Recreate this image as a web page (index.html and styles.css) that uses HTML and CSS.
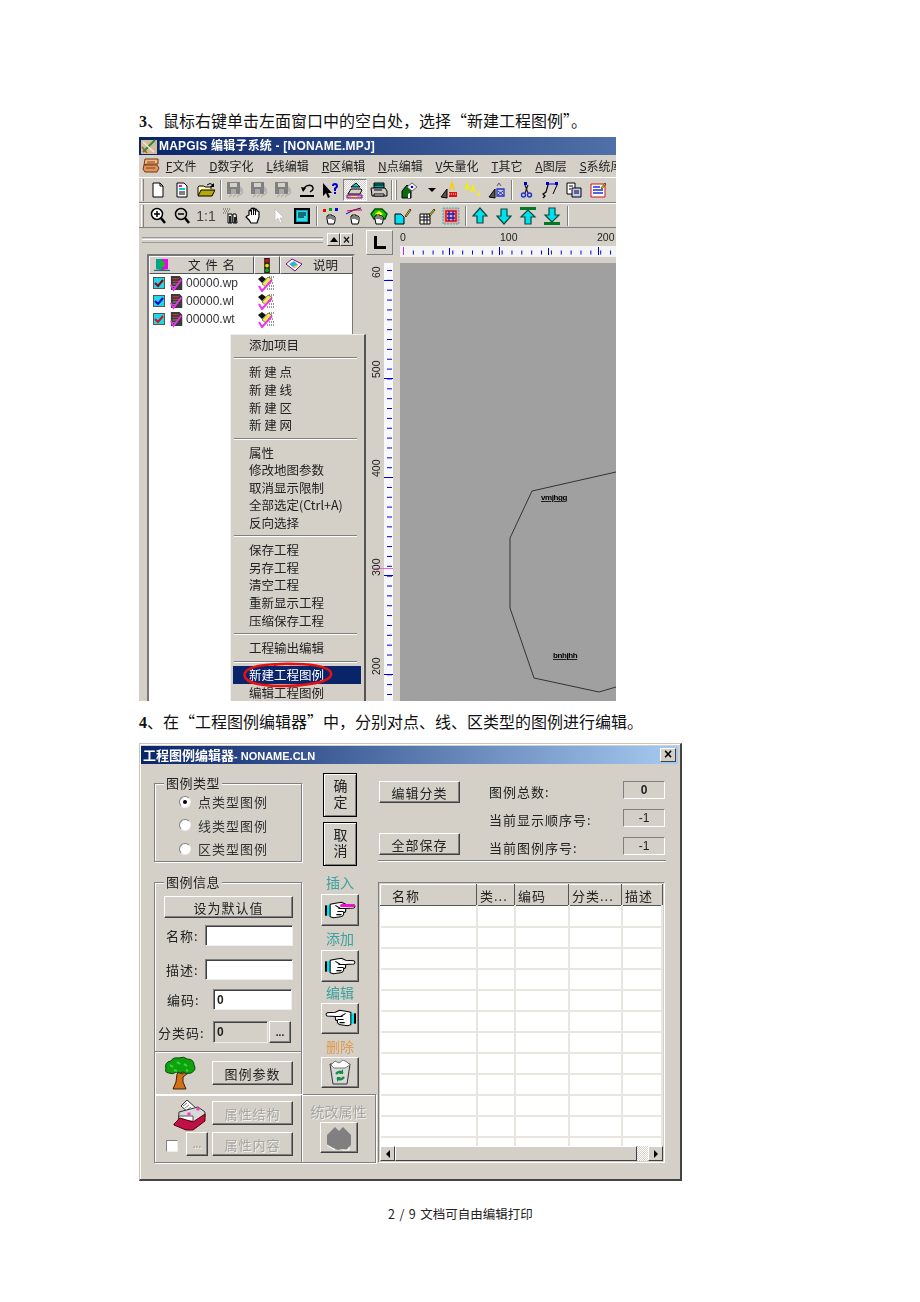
FILE: index.html
```html
<!DOCTYPE html>
<html lang="zh-CN">
<head>
<meta charset="utf-8">
<title>MAPGIS</title>
<link rel="stylesheet" href="styles.css">
</head>
<body>
<svg class="defs" aria-hidden="true">
<symbol id="i-new" viewBox="0 0 18 18"><path d="M4 2h7l3 3v11H4z" fill="#fff" stroke="#000"/><path d="M11 2v3h3" fill="none" stroke="#000"/></symbol>
<symbol id="i-doc" viewBox="0 0 18 18"><path d="M4 2h7l3 3v11H4z" fill="#fff" stroke="#000"/><path d="M6 5h3" stroke="#f0f" stroke-width="2"/><path d="M6 8h6" stroke="#0cc" stroke-width="2"/><path d="M6 11h6M6 13h6" stroke="#000"/></symbol>
<symbol id="i-open" viewBox="0 0 18 18"><path d="M1 14V6l1-1h5l1 1h6v2" fill="#ffffb0" stroke="#000"/><path d="M1 15l3-6h14l-3 6z" fill="#b8a800" stroke="#000"/><path d="M10 4q3-3 6 0" fill="none" stroke="#000"/><path d="M17 2v4h-4z"/></symbol>
<symbol id="i-save" viewBox="0 0 18 18"><path d="M1 1h13v12H1z" fill="#808080"/><path d="M4 2h7v4H4z" fill="#d4d0c8"/><path d="M5 8h5v5H5z" fill="#a8a8a8"/><path d="M3 16l3-3M7 16l3-3M11 16l3-3M14 14l3-3" stroke="#b4b4b4" stroke-width="1.600"/><path d="M14 5l3 3v3h-3z" fill="#b4b4b4"/></symbol>
<symbol id="i-undo" viewBox="0 0 18 18"><path d="M6 7q4-4 8-2 3 3-2 6" fill="none" stroke="#000" stroke-width="1.400"/><path d="M3 6l2 5 3-4z"/><path d="M2 14h14v2H2z"/></symbol>
<symbol id="i-help" viewBox="0 0 18 18"><path d="M1 2v13l3-3 2 5 2-1-2-4h4z"/><path d="M10 5q0-3 3-3 3 0 3 3 0 2-2 3v2h-2V7q2-1 2-2t-1-1q-1 0-1 1zM12 11h2v2h-2z" fill="#00c"/></symbol>
<symbol id="i-layout" viewBox="0 0 18 18"><path d="M5 6l5-4 4 4z" fill="#0cc" stroke="#000"/><path d="M2 13l3-5h10l1 1-2 4z" fill="#d4d0c8" stroke="#000"/><path d="M1 14h15v3H1z" fill="#d9a0d0" stroke="#800080"/><path d="M5 15h6v1H5z" fill="#ff0"/></symbol>
<symbol id="i-print" viewBox="0 0 18 18"><path d="M4 2h10v5H4z" fill="#00a0a0" stroke="#000"/><path d="M1 7h14l2 3v5H2z" fill="#c8c8c8" stroke="#000"/><path d="M4 13h10v2H4z" fill="#fff" stroke="#000"/><path d="M4 4h10M4 9h8" stroke="#000"/></symbol>
<symbol id="i-house" viewBox="0 0 18 18"><path d="M1 17V10l5-6 4 4v9z" fill="#0a6a12" stroke="#000"/><path d="M6 6l5-4 5 4-5 4z" fill="#fff" stroke="#666"/><circle cx="11" cy="6" r="1.300" fill="#00f"/><path d="M7 13l2-1v5H7z" fill="#fff"/></symbol>
<symbol id="i-a1" viewBox="0 0 18 18"><path d="M1 16l6-8v9z" fill="#555" stroke="#000"/><path d="M10 9l2-7 2 7" fill="none" stroke="#fc0" stroke-width="1.500"/><path d="M9 11h8v5H9z" fill="#e01010"/><path d="M9 13h8" stroke="#fff" stroke-dasharray="1 1"/></symbol>
<symbol id="i-a2" viewBox="0 0 18 18"><g fill="none" stroke="#f4f000" stroke-width="1.400"><path d="M1 9l2-6 2 6M2 7h2"/><path d="M7 11l2-6 2 6M8 9h2"/></g><path d="M13 15l1.500-5 1.500 5z" fill="#f4f000"/></symbol>
<symbol id="i-a3" viewBox="0 0 18 18"><path d="M1 16l6-8v9z" fill="#555" stroke="#000"/><path d="M9 5l2-3 2 3" fill="none" stroke="#555"/><path d="M9 8h7v7H9z" fill="none" stroke="#2030d0" stroke-width="1.300"/><path d="M10 10l5 4M15 10l-5 4" stroke="#2030d0"/></symbol>
<symbol id="i-cut" viewBox="0 0 18 18"><path d="M7 1h3v3H7z" fill="#00c"/><path d="M8 4l3 8M11 4l-3 8" stroke="#222" stroke-width="1.200"/><circle cx="6.500" cy="14" r="2" fill="none" stroke="#2030d0" stroke-width="1.400"/><circle cx="12.500" cy="14" r="2" fill="none" stroke="#2030d0" stroke-width="1.400"/></symbol>
<symbol id="i-node" viewBox="0 0 18 18"><path d="M6 3h10" stroke="#00c"/><path d="M5 1h3v3H5zM14 1h3v3h-3z" fill="#00c"/><path d="M7 4L5 11l-3 2 2 2-2 2" fill="none" stroke="#000" stroke-width="1.200"/><path d="M16 4l-4 9" stroke="#000"/></symbol>
<symbol id="i-copy" viewBox="0 0 18 18"><path d="M2 2h8v11H2z" fill="#fff" stroke="#000"/><path d="M7 7h9v9H7z" fill="#c0ccff" stroke="#000"/><path d="M4 5h4M4 8h2M9 10h5M9 12h5" stroke="#000"/></symbol>
<symbol id="i-form" viewBox="0 0 18 18"><path d="M2 3h14v13H2z" fill="#fff" stroke="#d01010"/><path d="M4 6h7M4 9h10M4 12h10" stroke="#2030d0" stroke-width="1.400"/><path d="M12 7l4-5 1 1-4 5z" fill="#f4e000" stroke="#000" stroke-width=".6"/></symbol>
<symbol id="i-zin" viewBox="0 0 18 18"><circle cx="8" cy="7" r="5.500" fill="#fff" stroke="#000" stroke-width="1.500"/><path d="M5 7h6M8 4v6" stroke="#000" stroke-width="1.500"/><path d="M12 11l4 5" stroke="#000" stroke-width="2.500"/></symbol>
<symbol id="i-zout" viewBox="0 0 18 18"><circle cx="8" cy="7" r="5.500" fill="#d4d0c8" stroke="#000" stroke-width="1.500"/><path d="M5 7h6" stroke="#000" stroke-width="1.500"/><path d="M12 11l4 5" stroke="#000" stroke-width="2.500"/></symbol>
<symbol id="i-bino" viewBox="0 0 18 18"><path d="M2 2h7M3 4h6M2 6h6" stroke="#555" stroke-dasharray="1 1"/><path d="M7 7h4v9H7zM12 7h3l1 9h-4z" fill="#fff" stroke="#000"/><path d="M8 9h2v7H8zM13 10h2v6h-2z" fill="#222"/></symbol>
<symbol id="i-hand" viewBox="0 0 18 18"><path d="M4 8V4l1-1 1 1V2l1-1 1 1v0l1-1 1 1v1l1-1 1 1v1l1 0 1 1v5l-1 3-1 3H6l-2-3-3-3 1-1z" fill="#fff" stroke="#000" stroke-width="1.200"/><path d="M6.500 3v5M8.500 2v6M10.500 3v5" stroke="#000"/></symbol>
<symbol id="i-ptr" viewBox="0 0 18 18"><path d="M6 2v12l3-3 2 5 2-1-2-4h4z" fill="#fff" stroke="#bbb" stroke-width=".7"/></symbol>
<symbol id="i-box" viewBox="0 0 18 18"><path d="M2 2h14v14H2z" fill="#00a8b8" stroke="#000" stroke-width="2"/><path d="M4 4h10v10H4z" fill="#30d8e8"/><path d="M5 6h8M5 8h8M5 10h6" stroke="#000"/></symbol>
<symbol id="i-hrgb" viewBox="0 0 18 18"><path d="M1 2h3v3H1z" fill="#e00"/><path d="M7 1h3v3H7z" fill="#0a0"/><path d="M13 1h3v3h-3z" fill="#00e"/><use href="#hand-s"/></symbol>
<symbol id="i-hline" viewBox="0 0 18 18"><path d="M0 7l8-4 7-2" stroke="#00c" fill="none"/><path d="M1 4l8-1 7 0" stroke="#e00" fill="none"/><use href="#hand-s"/></symbol>
<symbol id="i-harea" viewBox="0 0 18 18"><path d="M1 7l4-5h7l5 5-2 5H4z" fill="#10c010" stroke="#054a05" stroke-width="1.400"/><path d="M5 7l4-3 4 3-3 2z" fill="#ff0"/><use href="#hand-s"/></symbol>
<symbol id="hand-s" viewBox="0 0 18 18"><path d="M5 12V9h1V8h4v1h2l1 1v4l-1 3H6z" fill="#fff" stroke="#000"/><path d="M7 9v3M9 9v3M11 10v3" stroke="#000"/></symbol>
<symbol id="i-pgp" viewBox="0 0 18 18"><path d="M1 7h6l3 3v7H1z" fill="#00e0f0" stroke="#000"/><path d="M11 9l5-7 1 1-5 7z" fill="#f4e000" stroke="#000" stroke-width=".7"/></symbol>
<symbol id="i-tbp" viewBox="0 0 18 18"><path d="M2 7h10v10H2z" fill="#fff" stroke="#000"/><path d="M2 10h10M2 13h10M6 7v10M9 7v10" stroke="#000"/><path d="M11 8l5-6 1 1-5 6z" fill="#f4e000" stroke="#000" stroke-width=".7"/></symbol>
<symbol id="i-fuzz" viewBox="0 0 18 18"><path d="M1 1h16v16H1z" fill="#f0a0a0" stroke="#20c0c0" stroke-dasharray="2 1"/><path d="M4 4h10v10H4z" fill="none" stroke="#d01010" stroke-width="1.500"/><path d="M5 7h8M5 11h8M7 4v10M11 4v10" stroke="#1020c0" stroke-width="1.300"/></symbol>
<symbol id="i-up" viewBox="0 0 18 18"><path d="M9 1L2 9h4v7h6V9h4z" fill="#00e0f0" stroke="#0a4a3a" stroke-width="1.200"/></symbol>
<symbol id="i-dn" viewBox="0 0 18 18"><path d="M9 17L2 9h4V2h6v7h4z" fill="#00e0f0" stroke="#0a4a3a" stroke-width="1.200"/></symbol>
<symbol id="i-upg" viewBox="0 0 18 18"><path d="M1 0h16v3H1z" fill="#007a20"/><path d="M9 3L2 10h4v7h6v-7h4z" fill="#00e0f0" stroke="#0a4a3a" stroke-width="1.200"/></symbol>
<symbol id="i-dng" viewBox="0 0 18 18"><path d="M1 15h16v3H1z" fill="#007a20"/><path d="M9 15L2 8h4V1h6v7h4z" fill="#00e0f0" stroke="#0a4a3a" stroke-width="1.200"/></symbol>
<symbol id="i-fpage" viewBox="0 0 16 17"><path d="M1 0h10l3 3v13H1z" fill="#3a3a3a"/><path d="M3 3h7M3 6h8" stroke="#e04040"/><path d="M3 9h6M3 12h4" stroke="#999"/><path d="M1 10l3 6 9-12" fill="none" stroke="#f030f0" stroke-width="2"/></symbol>
<symbol id="i-fpen" viewBox="0 0 17 17"><path d="M0 4l4-3 4 3-4 4z" fill="#111"/><path d="M4 9l6-7 4 2-6 8z" fill="#ecec50" stroke="#333" stroke-width=".6"/><path d="M10 8h6M11 11h5M9 14h7M11 2h5" stroke="#333" stroke-dasharray="1 1"/><path d="M1 11l3 5 10-11" fill="none" stroke="#f030f0" stroke-width="2"/></symbol>
<symbol id="hand" viewBox="0 0 30 18"><path d="M0 4h2v10H0z" fill="#000"/><path d="M2 4h3v10H2z" fill="#00e0f0"/><path d="M5 3l5-1 6-1 4 2 8 .5q2 1.500 0 3l-8 .5v2q0 2-2 2v2q-1 2-3 2l-7 1-3-1z" fill="#fff" stroke="#000"/><path d="M13 7h7M12 10h6M11 13h5M10 4l5 3" stroke="#000" fill="none"/></symbol>
</svg>

<main class="page">
<p class="line"><span class="num">3</span>、鼠标右键单击左面窗口中的空白处，选择“新建工程图例”。</p>

<section class="win shot">
  <header class="tb">
    <svg class="tb-ico" viewBox="0 0 18 18"><path d="M1 3h16v14H1z" fill="#d4bc98"/><path d="M3 15L15 3" stroke="#2a8a40" stroke-width="2"/><path d="M3 5l11 10" stroke="#f0e8d8" stroke-width="1.500"/><path d="M2 10l5 6" stroke="#a06030" stroke-width="1.500"/></svg>
    <span>MAPGIS 编辑子系统 - [NONAME.MPJ]</span>
  </header>
  <nav class="menubar">
    <svg class="mb-ico" viewBox="0 0 18 18"><path d="M3 2h13v5H5l-3 1z" fill="#e8c080" stroke="#803010"/><path d="M2 8h13l2 3-2 4H3l-2-3z" fill="#d89860" stroke="#803010"/><path d="M5 5h8M4 11h9" stroke="#a03010"/></svg>
    <span><u>F</u>文件</span><span><u>D</u>数字化</span><span><u>L</u>线编辑</span><span><u>R</u>区编辑</span><span><u>N</u>点编辑</span><span><u>V</u>矢量化</span><span><u>T</u>其它</span><span><u>A</u>图层</span><span><u>S</u>系统库</span>
  </nav>
  <div class="bar">
    <i class="grip"></i>
    <b class="cell"><svg class="ico"><use href="#i-new"/></svg></b>
    <b class="cell"><svg class="ico"><use href="#i-doc"/></svg></b>
    <b class="cell"><svg class="ico"><use href="#i-open"/></svg></b>
    <i class="sep"></i>
    <b class="cell"><svg class="ico"><use href="#i-save"/></svg></b>
    <b class="cell"><svg class="ico"><use href="#i-save"/></svg></b>
    <b class="cell"><svg class="ico"><use href="#i-save"/></svg></b>
    <b class="cell"><svg class="ico"><use href="#i-undo"/></svg></b>
    <b class="cell"><svg class="ico"><use href="#i-help"/></svg></b>
    <b class="cell on"><svg class="ico"><use href="#i-layout"/></svg></b>
    <b class="cell"><svg class="ico"><use href="#i-print"/></svg></b>
    <i class="sep wide"></i>
    <b class="cell"><svg class="ico"><use href="#i-house"/></svg></b>
    <b class="drop"></b>
    <b class="cell"><svg class="ico"><use href="#i-a1"/></svg></b>
    <b class="cell"><svg class="ico"><use href="#i-a2"/></svg></b>
    <b class="cell"><svg class="ico"><use href="#i-a3"/></svg></b>
    <i class="sep"></i>
    <b class="cell"><svg class="ico"><use href="#i-cut"/></svg></b>
    <b class="cell"><svg class="ico"><use href="#i-node"/></svg></b>
    <b class="cell"><svg class="ico"><use href="#i-copy"/></svg></b>
    <b class="cell"><svg class="ico"><use href="#i-form"/></svg></b>
  </div>
  <div class="bar">
    <i class="grip"></i>
    <b class="cell"><svg class="ico"><use href="#i-zin"/></svg></b>
    <b class="cell"><svg class="ico"><use href="#i-zout"/></svg></b>
    <b class="cell ratio">1:1</b>
    <b class="cell"><svg class="ico"><use href="#i-bino"/></svg></b>
    <b class="cell"><svg class="ico"><use href="#i-hand"/></svg></b>
    <b class="cell"><svg class="ico"><use href="#i-ptr"/></svg></b>
    <b class="cell"><svg class="ico"><use href="#i-box"/></svg></b>
    <i class="sep"></i>
    <b class="cell"><svg class="ico"><use href="#i-hrgb"/></svg></b>
    <b class="cell"><svg class="ico"><use href="#i-hline"/></svg></b>
    <b class="cell"><svg class="ico"><use href="#i-harea"/></svg></b>
    <b class="cell"><svg class="ico"><use href="#i-pgp"/></svg></b>
    <b class="cell"><svg class="ico"><use href="#i-tbp"/></svg></b>
    <b class="cell"><svg class="ico"><use href="#i-fuzz"/></svg></b>
    <i class="sep"></i>
    <b class="cell"><svg class="ico"><use href="#i-up"/></svg></b>
    <b class="cell"><svg class="ico"><use href="#i-dn"/></svg></b>
    <b class="cell"><svg class="ico"><use href="#i-upg"/></svg></b>
    <b class="cell"><svg class="ico"><use href="#i-dng"/></svg></b>
    <i class="sep end"></i>
  </div>

  <div class="work">
    <aside class="panel">
      <div class="dock">
        <i class="dock-lines"></i>
        <b class="mini"><i class="tri"></i></b>
        <b class="mini mini-x">×</b>
      </div>
      <div class="list">
        <div class="list-head">
          <span class="lh lh-name">
            <svg class="lh-ico" viewBox="0 0 18 14"><path d="M1 12l8-1 8 1v1H1z" fill="#2a6a6a"/><path d="M3 1h6v10H3z" fill="#00a0a0"/><path d="M9 1h6v10H9z" fill="#f000f0"/><circle cx="9" cy="6" r="3" fill="#10c010"/></svg>
            <span class="lh-wide">文 件 名</span>
          </span>
          <span class="lh lh-light"><svg class="lh-ico-s" viewBox="0 0 12 16"><path d="M3 0h6v16H3z" fill="#222"/><circle cx="6" cy="3" r="2" fill="#e01010"/><circle cx="6" cy="8" r="2" fill="#e8e000"/><circle cx="6" cy="13" r="2" fill="#10b010"/></svg></span>
          <span class="lh lh-desc">
            <svg class="lh-ico" viewBox="0 0 18 14"><path d="M1 6l6-5 10 5-7 7z" fill="#fff" stroke="#808" /><path d="M4 6l5-3 4 4-4 3z" fill="#30b0e0"/><path d="M8 8l5-1-2 3z" fill="#e8e000"/></svg>
            <span>说明</span>
          </span>
        </div>
        <div class="file"><i class="chk"><svg viewBox="0 0 10 10"><path d="M1 5l3 3 5-6" fill="none" stroke="#900" stroke-width="2"/></svg></i><svg class="f1"><use href="#i-fpage"/></svg><span class="fn">00000.wp</span><svg class="f2"><use href="#i-fpen"/></svg></div>
        <div class="file"><i class="chk"><svg viewBox="0 0 10 10"><path d="M1 5l3 3 5-6" fill="none" stroke="#00c" stroke-width="2"/></svg></i><svg class="f1"><use href="#i-fpage"/></svg><span class="fn">00000.wl</span><svg class="f2"><use href="#i-fpen"/></svg></div>
        <div class="file"><i class="chk"><svg viewBox="0 0 10 10"><path d="M1 5l3 3 5-6" fill="none" stroke="#e01010" stroke-width="2"/></svg></i><svg class="f1"><use href="#i-fpage"/></svg><span class="fn">00000.wt</span><svg class="f2"><use href="#i-fpen"/></svg></div>
      </div>
    </aside>

    <div class="view">
      <div class="corner"><i class="ell"></i></div>
      <svg class="rul-top" viewBox="0 0 216 27">
        <defs><pattern id="tx" width="9.860" height="27" patternUnits="userSpaceOnUse" x="3"><path d="M.5 20.500v4" stroke="#0000e0"/></pattern></defs>
        <rect width="216" height="16" fill="#d4d0c8"/>
        <rect y="16" width="216" height="11" fill="#f4f4f4"/>
        <rect width="216" height="27" fill="url(#tx)"/>
        <path d="M3.500 17v8" stroke="#e020e0"/>
        <path d="M49.500 18v7M99.500 17v8M148.500 18v7M198.500 17v8" stroke="#0000e0"/>
        <text x="0" y="11">0</text><text x="100" y="11">100</text><text x="197" y="11">200</text>
      </svg>
      <svg class="rul-left" viewBox="0 0 27 438">
        <defs><pattern id="ty" width="27" height="9.860" patternUnits="userSpaceOnUse" y="7"><path d="M21 .5h5" stroke="#0000e0"/></pattern></defs>
        <rect width="27" height="438" fill="#d4d0c8"/>
        <rect x="18" width="9" height="438" fill="#f8f8ff"/>
        <rect width="27" height="438" fill="url(#ty)"/>
        <path d="M18 17.500h9M18 115.500h9M18 214.500h9M18 312.500h9M18 411.500h9" stroke="#0000e0"/>
        <path d="M9 305.500h18" stroke="#f060e0"/>
        <text transform="translate(14 15) rotate(-90)">60</text>
        <text transform="translate(14 115) rotate(-90)">500</text>
        <text transform="translate(14 214) rotate(-90)">400</text>
        <text transform="translate(14 313) rotate(-90)">300</text>
        <text transform="translate(14 412) rotate(-90)">200</text>
      </svg>
      <svg class="canvas" viewBox="0 0 216 438">
        <rect width="216" height="438" fill="#a0a0a0"/>
        <path d="M216 209L132 228L110 275V345L134 415L199 429L216 424" fill="none" stroke="#333"/>
        <text class="geo" x="141" y="237">vmjhgg</text>
        <text class="geo" x="153" y="395">bnhjhh</text>
      </svg>
    </div>

    <div class="menu">
      <div class="mi">添加项目</div>
      <hr class="ms">
      <div class="mi">新 建 点</div>
      <div class="mi">新 建 线</div>
      <div class="mi">新 建 区</div>
      <div class="mi">新 建 网</div>
      <hr class="ms">
      <div class="mi">属性</div>
      <div class="mi">修改地图参数</div>
      <div class="mi">取消显示限制</div>
      <div class="mi">全部选定(Ctrl+A)</div>
      <div class="mi">反向选择</div>
      <hr class="ms">
      <div class="mi">保存工程</div>
      <div class="mi">另存工程</div>
      <div class="mi">清空工程</div>
      <div class="mi">重新显示工程</div>
      <div class="mi">压缩保存工程</div>
      <hr class="ms">
      <div class="mi">工程输出编辑</div>
      <hr class="ms">
      <div class="mi sel">新建工程图例</div>
      <div class="mi">编辑工程图例</div>
      <svg class="circle" viewBox="0 0 92 26"><path d="M44 2C22 2 6 4 3 11c-3 8 10 13 36 13 22 0 48-3 50-11C91 6 74 2 54 2c-8 0-14-1-22 1" fill="none" stroke="#e81010" stroke-width="2.600"/></svg>
    </div>
  </div>
</section>

<p class="line second"><span class="num">4</span>、在“工程图例编辑器”中，分别对点、线、区类型的图例进行编辑。</p>

<section class="dlg shot">
  <header class="dlg-tb">
    <span>工程图例编辑器<em>- NONAME.CLN</em></span>
    <b class="close">×</b>
  </header>
  <div class="dlg-main">
    <div class="dlg-left">
      <div class="dlg-upper">
        <div class="groups">
          <div class="grp grp-type">
            <span class="legend">图例类型</span>
            <label class="radio"><i class="dot on"></i>点类型图例</label>
            <label class="radio"><i class="dot"></i>线类型图例</label>
            <label class="radio"><i class="dot"></i>区类型图例</label>
          </div>
          <div class="grp grp-info">
            <span class="legend">图例信息</span>
            <div class="info-top">
              <button class="btn btn-default">设为默认值</button>
              <div class="field f-name"><span>名称:</span><i class="input"></i></div>
              <div class="field f-desc"><span>描述:</span><i class="input"></i></div>
              <div class="field f-code"><span>编码:</span><i class="input val">0</i></div>
              <div class="field f-cat"><span>分类码:</span><i class="input val ro">0</i><button class="btn btn-more">...</button></div>
            </div>
            <div class="info-tree">
              <svg class="tree" viewBox="0 0 32 34"><path d="M13 18l-1 8-3 7h13l-3-7 0-5 5-4-3-1-3 2-3-2z" fill="#d07018" stroke="#402000"/><path d="M2 13Q0 6 7 5q2-4 8-3 5-2 8 1 7 0 7 6 3 5-3 8-5 2-8-1-3 2-7 0-3 3-7 1-5-1-3-4z" fill="#10a010" stroke="#054a05"/><path d="M6 9l3 2M13 6l3 2M20 8l3 2M10 14l3 1M22 14l2 1" stroke="#30e030" stroke-width="2"/></svg>
              <button class="btn btn-wide">图例参数</button>
            </div>
          </div>
        </div>
        <div class="midcol">
          <button class="btn btn-tall"><span class="vert">确定</span></button>
          <button class="btn btn-tall btn-gap"><span class="vert">取消</span></button>
          <span class="cap teal c1">插入</span>
          <button class="btn btn-ico"><svg class="hand"><use href="#hand"/></svg><i class="pink"></i></button>
          <span class="cap teal c2">添加</span>
          <button class="btn btn-ico"><svg class="hand"><use href="#hand"/></svg></button>
          <span class="cap teal c3">编辑</span>
          <button class="btn btn-ico short"><svg class="hand flip"><use href="#hand"/></svg></button>
          <span class="cap orange c2">删除</span>
          <button class="btn btn-ico short">
            <svg class="bin" viewBox="0 0 24 26"><path d="M2 4l3 20h14l3-20z" fill="#d8d8d8" stroke="#333"/><path d="M3 5l4-4 4 2 4-3 4 2 3 3-5 3H6z" fill="#fff" stroke="#777"/><path d="M8 14q3-4 7-1M16 17q-3 4-7 1" fill="none" stroke="#109040" stroke-width="2.200"/><path d="M15 9v5h-4zM9 22v-5h4z" fill="#109040"/></svg>
          </button>
        </div>
      </div>
      <div class="attr">
        <div class="attr-l">
          <svg class="card" viewBox="0 0 33 33"><path d="M8 7l6-6 9 8-6 6z" fill="#fff" stroke="#333"/><path d="M10 7l4-3M12 9l4-3M14 11l4-3" stroke="#888"/><path d="M6 13l19-5 7 5v5l-6 6H5z" fill="#d8d8d8" stroke="#333"/><path d="M6 17h14v5H6z" fill="#fff" stroke="#555"/><path d="M1 25l6-6 13 4 12-8v7l-12 9-7 0-12-5z" fill="#c01048" stroke="#500"/><circle cx="25" cy="10" r="1.800" fill="#f040c0"/><circle cx="16" cy="15" r="1.800" fill="#f040c0"/></svg>
          <button class="btn btn-wide off">属性结构</button>
          <div class="attr-chk"><i class="box"></i><button class="btn btn-more off">...</button></div>
          <button class="btn btn-wide off">属性内容</button>
        </div>
        <div class="attr-r">
          <span class="cap gray">统改属性</span>
          <button class="btn btn-ico short"><svg class="blob" viewBox="0 0 30 26"><path d="M3 10l8-8 4 4 4-4 8 8v10l-5 5-5-1-3 1-11-5z" fill="#808080"/><path d="M3 20l8 5M18 25h7v-3" stroke="#fff" fill="none"/></svg></button>
        </div>
      </div>
    </div>

    <div class="dlg-right">
      <div class="stats">
        <div class="stat-btns">
          <button class="btn btn-wide">编辑分类</button>
          <button class="btn btn-wide">全部保存</button>
        </div>
        <div class="stat-grid">
          <span>图例总数:</span><b class="num-box bold">0</b>
          <span>当前显示顺序号:</span><b class="num-box">-1</b>
          <span>当前图例序号:</span><b class="num-box">-1</b>
        </div>
      </div>
      <hr class="rule">
      <div class="tbl">
        <div class="tbl-scroll">
          <table>
            <thead><tr><th>名称</th><th>类...</th><th>编码</th><th>分类...</th><th>描述</th></tr></thead>
            <tbody>
              <tr><td></td><td></td><td></td><td></td><td></td></tr>
              <tr><td></td><td></td><td></td><td></td><td></td></tr>
              <tr><td></td><td></td><td></td><td></td><td></td></tr>
              <tr><td></td><td></td><td></td><td></td><td></td></tr>
              <tr><td></td><td></td><td></td><td></td><td></td></tr>
              <tr><td></td><td></td><td></td><td></td><td></td></tr>
              <tr><td></td><td></td><td></td><td></td><td></td></tr>
              <tr><td></td><td></td><td></td><td></td><td></td></tr>
              <tr><td></td><td></td><td></td><td></td><td></td></tr>
              <tr><td></td><td></td><td></td><td></td><td></td></tr>
              <tr><td></td><td></td><td></td><td></td><td></td></tr>
              <tr><td></td><td></td><td></td><td></td><td></td></tr>
            </tbody>
          </table>
        </div>
        <div class="hscroll">
          <b class="sb-btn"><i class="arr-l"></i></b>
          <b class="sb-thumb"></b>
          <i class="sb-track"></i>
          <b class="sb-btn"><i class="arr-r"></i></b>
        </div>
      </div>
    </div>
  </div>
</section>

<footer class="foot">2 / 9 文档可自由编辑打印</footer>
</main>
</body>
</html>
```

FILE: styles.css
```css
* { box-sizing: border-box; }
html, body { margin: 0; background: #fff; }
body { font-family: "Noto Sans CJK SC", "Liberation Sans", sans-serif; color: #111; }
.defs { position: absolute; width: 0; height: 0; }
.page { width: 920px; height: 1302px; padding: 111px 0 0 139px; overflow: hidden; }
.line { margin: 0; height: 18px; font-size: 16px; line-height: 18px; white-space: nowrap; color: #111; }
.line.second { margin-top: 11px; }
.num { font-family: "Liberation Serif", serif; font-weight: 700; }
.shot { filter: blur(.35px); }

/* main window */
.win { position: relative; width: 477px; height: 564px; margin-top: 8px; background: #d4d0c8; overflow: hidden; display: flex; flex-direction: column; }
.tb { height: 18px; flex: none; display: flex; align-items: center; gap: 1px; padding-left: 1px; background: linear-gradient(90deg, #0a246a, #4f70a8); color: #fff; font: 700 12px/18px "Liberation Sans", "Noto Sans CJK SC", sans-serif; letter-spacing: .2px; white-space: nowrap; }
.tb-ico { width: 18px; height: 18px; flex: none; }
.menubar { height: 22px; flex: none; display: flex; align-items: center; gap: 12.800px; font-size: 12px; line-height: 22px; color: #222; white-space: nowrap; padding-left: 3px; overflow: hidden; }
.menubar span { flex: none; }
.mb-ico { width: 18px; height: 18px; flex: none; margin-right: -7px; }
.bar { height: 26px; flex: none; display: flex; align-items: center; border-top: 1px solid #fff; border-bottom: 1px solid #808080; padding-left: 2px; }
.bar + .bar { height: 25px; }
.grip { width: 3px; height: 22px; margin-right: 2px; border-left: 1px solid #fff; border-right: 1px solid #808080; }
.cell { width: 24px; height: 22px; flex: none; display: flex; align-items: center; justify-content: center; }
.cell.on { background: repeating-conic-gradient(#fff 0 25%, #d4d0c8 0 50%) 0 0 / 2px 2px; border: 1px solid; border-color: #808080 #fff #fff #808080; }
.ico { width: 18px; height: 18px; }
.ratio { font: 400 14px "Liberation Sans", sans-serif; color: #444; }
.sep { width: 5px; height: 20px; flex: none; position: relative; background: linear-gradient(90deg, transparent 2px, #808080 2px, #808080 3px, #fff 3px, #fff 4px, transparent 4px); }
.sep.wide { width: 7px; background: linear-gradient(90deg, #808080 1px, #fff 1px, #fff 2px, transparent 2px, transparent 4px, #fff 4px, #fff 5px, #808080 5px, #808080 6px, transparent 6px); }
.sep.end { margin-left: 1px; }
.drop { width: 15px; flex: none; display: flex; justify-content: center; }
.drop::after { content: ""; border: 4px solid transparent; border-top: 4px solid #000; border-bottom: 0; margin-left: 4px; }

.work { position: relative; flex: 1; min-height: 0; display: flex; }
.panel { width: 227px; flex: none; padding-top: 5px; overflow: hidden; }
.dock { height: 13px; display: flex; align-items: center; padding-left: 3px; margin-bottom: 8px; }
.dock-lines { width: 181px; height: 6px; border-top: 1px solid #999; border-bottom: 1px solid #999; background: linear-gradient(#fff, #fff) 0 1px / 100% 1px no-repeat; margin-right: 4px; }
.mini { width: 13px; height: 13px; background: #d4d0c8; border: 1px solid; border-color: #fff #404040 #404040 #fff; display: flex; align-items: center; justify-content: center; font: 700 12px/10px "Liberation Sans", sans-serif; }
.tri { border: 4px solid transparent; border-bottom: 5px solid #000; border-top: 0; }
.list { margin-left: 8px; width: 208px; height: 460px; background: #fff; border: 2px solid; border-color: #777 #d4d0c8 transparent #777; box-shadow: inset -1px 0 #777; }
.list-head { height: 18px; display: flex; color: #222; font-size: 12.500px; line-height: 18px; }
.lh { display: flex; align-items: center; background: #d4d0c8; border: 1px solid; border-color: #fff #555 #555 #fff; }
.lh-name { width: 105px; padding-left: 3px; gap: 17px; }
.lh-wide { letter-spacing: 1px; }
.lh-light { width: 26px; justify-content: center; }
.lh-desc { flex: 1; padding-left: 4px; gap: 10px; }
.lh-ico { width: 18px; height: 14px; }
.lh-ico-s { width: 12px; height: 15px; }
.file { height: 18px; display: flex; align-items: center; padding-left: 4px; font: 400 12px "Liberation Sans", sans-serif; color: #333; }
.chk { width: 12px; height: 12px; flex: none; background: #20d8e8; border: 1px solid #555; display: block; }
.chk svg { display: block; width: 10px; height: 10px; }
.f1 { width: 14px; height: 17px; margin-left: 5px; flex: none; }
.fn { width: 72px; margin-left: 2px; flex: none; }
.f2 { width: 17px; height: 17px; flex: none; }

.view { width: 250px; flex: none; display: grid; grid-template-columns: 27px 7px 216px; grid-template-rows: 27px 6px 438px; padding-top: 2px; }
.corner { grid-column: 1; grid-row: 1; height: 25px; background: #d4d0c8; border: 1px solid; border-color: #fff #808080 #808080 #fff; display: flex; align-items: center; justify-content: center; }
.ell { width: 12px; height: 13px; border-left: 3px solid #000; border-bottom: 3px solid #000; }
.rul-top { grid-column: 3; grid-row: 1; width: 216px; height: 27px; }
.rul-left { grid-column: 1; grid-row: 3; width: 27px; height: 438px; }
.canvas { grid-column: 3; grid-row: 3; width: 216px; height: 438px; }
.rul-top text, .rul-left text { font: 400 10.500px "Liberation Sans", sans-serif; fill: #222; }
.canvas .geo { font: 700 8px "Liberation Sans", sans-serif; letter-spacing: -.4px; text-decoration: underline; fill: #000; }

.menu { position: absolute; left: 91px; top: 106px; width: 136px; height: 370px; padding: 1px 3px 0 2px; background: #d4d0c8; border-left: 1px solid #eee; border-top: 1px solid #eee; border-right: 2px solid #555; }
.mi { height: 17.600px; line-height: 17.600px; padding-left: 16px; font-size: 12.500px; color: #222; white-space: nowrap; }
.mi.sel { background: #0a246a; color: #fff; }
.ms { height: 2px; margin: 3.900px 4px 3.900px 1px; border: 0; border-top: 1px solid #808080; border-bottom: 1px solid #fff; }
.circle { position: absolute; left: 11px; top: 327px; width: 92px; height: 26px; }

/* dialog */
.dlg { width: 543px; height: 438px; margin-top: 13px; background: #d4d0c8; border-top: 1px solid #c8c4bc; border-left: 1px solid #c8c4bc; border-right: 2px solid #444; border-bottom: 2px solid #444; box-shadow: inset 1px 1px #fff; padding: 2px 1px 0 1px; }
.dlg-tb { height: 18px; margin-right: 1px; display: flex; justify-content: space-between; align-items: center; padding: 0 2px 0 2px; background: linear-gradient(90deg, #0a246a, #a6caf0); color: #fff; font: 700 13px/18px "Noto Sans CJK SC", sans-serif; }
.dlg-tb em { font: 700 11px "Liberation Sans", sans-serif; }
.close { width: 16px; height: 14px; background: #d4d0c8; color: #000; border: 1px solid; border-color: #fff #404040 #404040 #fff; font: 700 14px/11px "Liberation Sans", sans-serif; text-align: center; }
.dlg-main { display: flex; padding-left: 13px; }
.dlg-left { width: 222px; flex: none; }
.dlg-upper { display: flex; height: 330px; }
.groups { width: 148px; flex: none; }
.grp { position: relative; border: 1px solid #808080; box-shadow: 1px 1px #fff, inset 1px 1px #fff; }
.legend { position: absolute; left: 9px; top: -9px; padding: 0 2px; background: #d4d0c8; font-size: 13px; letter-spacing: .5px; line-height: 16px; color: #222; }
.grp-type { height: 79px; margin-top: 19px; padding-top: 6px; }
.radio { display: flex; align-items: center; height: 23.500px; padding-left: 24px; font-size: 13px; letter-spacing: 1px; color: #333; }
.dot { width: 12px; height: 12px; margin-right: 7px; flex: none; border-radius: 50%; background: #fff; border: 1px solid; border-color: #808080 #eee #eee #808080; display: flex; align-items: center; justify-content: center; }
.dot.on::after { content: ""; width: 4px; height: 4px; border-radius: 50%; background: #000; }
.grp-info { height: 212px; margin-top: 20px; border-bottom: 0; }
.info-top { height: 169px; padding: 13px 8px 0 9px; border-bottom: 1px solid #808080; box-shadow: 0 1px #fff; }
.btn { display: flex; align-items: center; justify-content: center; padding: 0; margin: 0; background: #d4d0c8; border: 1px solid; border-color: #fff #404040 #404040 #fff; box-shadow: inset -1px -1px #808080; font: 400 13px/15px "Noto Sans CJK SC", sans-serif; letter-spacing: 1px; color: #222; }
.btn-default { width: 129px; height: 22px; }
.field { display: flex; align-items: center; font-size: 13px; letter-spacing: 1px; color: #222; white-space: nowrap; }
.f-name { margin: 7px 0 0 2px; }
.f-desc { margin: 13px 0 0 2px; }
.f-code { margin: 9px 0 0 3px; }
.f-cat { margin: 11px 0 0 -6px; }
.field span { width: 39px; }
.f-code span { width: 46px; }
.f-cat span { width: 55px; }
.input { display: flex; align-items: center; width: 88px; height: 21px; background: #fff; border: 1px solid; border-color: #808080 #eee #eee #808080; box-shadow: inset 1px 1px #404040; font: 700 12px "Liberation Sans", sans-serif; padding-left: 3px; color: #222; }
.f-code .input { width: 79px; }
.f-cat .input { width: 55px; height: 22px; background: #d4d0c8; }
.btn-more { width: 22px; height: 22px; margin-left: 1px; font: 700 10px "Liberation Sans", sans-serif; letter-spacing: 0; }
.info-tree { height: 42px; display: flex; align-items: center; padding-left: 9px; gap: 16px; }
.tree { width: 32px; height: 34px; flex: none; }
.btn-wide { width: 81px; height: 24px; }
.midcol { width: 74px; flex: none; padding: 9px 0 0 2px; display: flex; flex-direction: column; align-items: center; }
.btn-tall { width: 34px; height: 44px; border: 1px solid #000; box-shadow: inset 1px 1px #fff, inset -1px -1px #808080; letter-spacing: 0; font-size: 14px; line-height: 17px; }
.vert { writing-mode: vertical-rl; letter-spacing: 2px; text-orientation: upright; }
.btn-gap { margin-top: 5px; }
.cap { display: block; font-size: 14px; line-height: 16px; letter-spacing: 0; }
.teal { color: #3ea0a0; }
.orange { color: #e09a50; }
.gray { color: #a8a5a0; text-shadow: 1px 1px #eee; }
.c1 { margin: 8px 0 4px; }
.c2 { margin: 4px 0 4px; }
.c3 { margin: 2px 0 3px; }
.c2.orange { margin: 4px 0 3px; }
.btn-ico { position: relative; width: 38px; height: 32px; }
.btn-ico.short { height: 31px; }
.hand { width: 31px; height: 19px; }
.flip { transform: scaleX(-1); }
.pink { position: absolute; right: 3px; top: 9px; width: 15px; height: 3px; background: #f010d0; border-radius: 2px; }
.bin { width: 24px; height: 26px; }
.blob { width: 30px; height: 26px; }
.attr { display: flex; height: 69px; border: 1px solid #808080; box-shadow: inset 1px 1px #fff, 1px 1px #fff; }
.attr-l { width: 147px; flex: none; display: grid; grid-template-columns: 57px 81px; grid-template-rows: 24px 24px; gap: 7px 0; padding-top: 6px; border-right: 1px solid #808080; box-shadow: 1px 0 #fff; }
.card { width: 33px; height: 33px; margin: -2px 0 0 18px; }
.attr-chk { display: flex; align-items: center; padding-left: 11px; }
.box { width: 12px; height: 12px; margin-top: 4px; background: #fff; border: 1px solid; border-color: #808080 #eee #eee #808080; flex: none; }
.attr-chk .btn-more { margin-left: 8px; height: 24px; }
.off { color: #a8a5a0; text-shadow: 1px 1px #f0f0f0; }
.attr-r { flex: 1; display: flex; flex-direction: column; align-items: center; padding-top: 8px; gap: 3px; }

.dlg-right { width: 288px; flex: none; margin-left: 2px; }
.stats { display: flex; height: 91px; padding: 17px 0 0 1px; }
.stat-btns { width: 110px; height: 74px; flex: none; display: flex; flex-direction: column; justify-content: space-between; }
.stat-btns .btn { height: 22px; }
.stat-grid { display: grid; grid-template-columns: 134px 42px; grid-auto-rows: 18px; row-gap: 10px; font-size: 13px; letter-spacing: 1px; line-height: 22px; color: #222; white-space: nowrap; }
.num-box { display: flex; align-items: center; justify-content: center; border: 1px solid; border-color: #808080 #fff #fff #808080; font: 400 12px "Liberation Sans", sans-serif; letter-spacing: 0; color: #222; }
.num-box.bold { font-weight: 700; }
.rule { height: 2px; margin: 5px 0 0; width: 288px; border: 0; border-top: 1px solid #808080; border-bottom: 1px solid #fff; }
.tbl { width: 287px; height: 281px; margin-top: 20px; display: flex; flex-direction: column; border: 1px solid; border-color: #808080 #fff #fff #808080; padding: 1px; }
.tbl-scroll { flex: 1; min-height: 0; overflow: hidden; background: #fff; }
table { border-collapse: collapse; table-layout: fixed; width: 283px; }
th { height: 21px; padding: 0 0 0 3px; background: #d4d0c8; font: 400 13px/15px "Noto Sans CJK SC", sans-serif; letter-spacing: 1px; color: #222; text-align: left; border: 1px solid; border-color: #fff #555 #555 #fff; white-space: nowrap; overflow: hidden; }
th:first-child { width: 96px; padding-left: 11px; }
th:nth-child(2) { width: 38px; }
th:nth-child(3) { width: 54px; }
th:nth-child(4) { width: 53px; }
td { height: 21px; padding: 0; border-right: 2px solid #e8e6e0; border-bottom: 2px solid #e8e6e0; background: #fff; }
.hscroll { height: 15px; flex: none; display: flex; background: #d4d0c8; }
.sb-btn { width: 15px; height: 15px; flex: none; display: flex; align-items: center; justify-content: center; border: 1px solid; border-color: #fff #404040 #404040 #fff; }
.sb-thumb { width: 242px; flex: none; border: 1px solid; border-color: #fff #404040 #404040 #fff; }
.sb-track { flex: 1; background: repeating-conic-gradient(#fff 0 25%, #d4d0c8 0 50%) 0 0 / 2px 2px; }
.arr-l { border: 4px solid transparent; border-right: 4px solid #000; border-left: 0; }
.arr-r { border: 4px solid transparent; border-left: 4px solid #000; border-right: 0; }

.foot { margin: 25px 0 0 249px; font-size: 12.500px; line-height: 16px; word-spacing: 1.700px; color: #222; white-space: nowrap; }
```
